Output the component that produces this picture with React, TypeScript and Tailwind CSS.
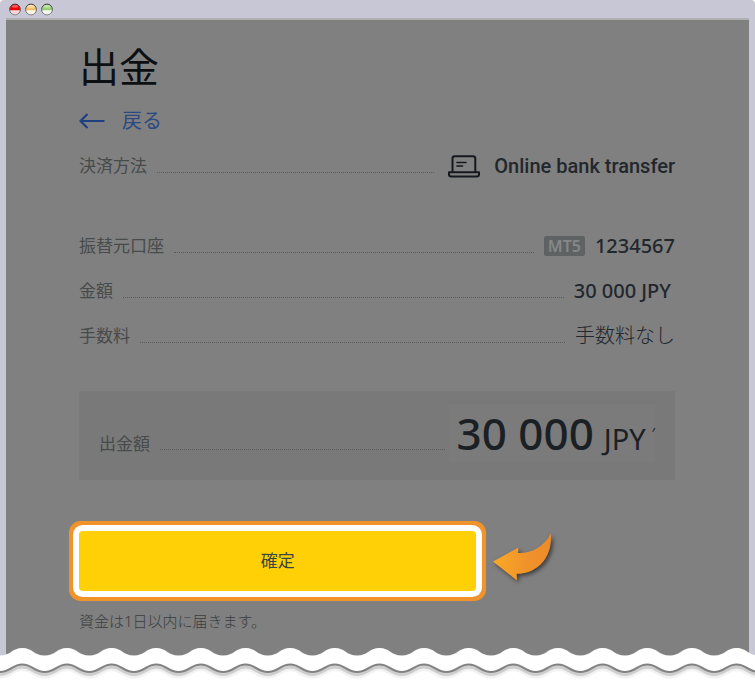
import type { ReactNode } from "react";

interface RowProps {
  label: string;
  children: ReactNode;
}

const lights = [
  { id: "close", top: "#ff1a1a", mid: "#e60000", bottom: "#ffd6d6" },
  { id: "minimize", top: "#ffe2a8", mid: "#f2bc62", bottom: "#fff6e6" },
  { id: "zoom", top: "#b9e3a0", mid: "#93cc72", bottom: "#f6fbf2" },
];

function TitleBar() {
  return (
    <div className="flex h-[18px] items-end gap-1 px-[9px] pb-[2px]">
      {lights.map((light) => (
        <svg key={light.id} width="12" height="13" viewBox="0 0 12 13">
          <defs>
            <linearGradient id={light.id} x1="0" y1="0" x2="0" y2="1">
              <stop offset="0" stopColor={light.top} />
              <stop offset="0.5" stopColor={light.mid} />
              <stop offset="0.62" stopColor={light.bottom} />
              <stop offset="1" stopColor={light.bottom} />
            </linearGradient>
            <linearGradient id={`${light.id}-rim`} x1="0" y1="0" x2="0" y2="1">
              <stop offset="0" stopColor="#3a3434" />
              <stop offset="1" stopColor="#85858c" />
            </linearGradient>
          </defs>
          <circle
            cx="6"
            cy="6.5"
            r="5.4"
            fill={`url(#${light.id})`}
            stroke={`url(#${light.id}-rim)`}
            strokeWidth="1"
          />
          <ellipse cx="6" cy="3.4" rx="3" ry="1.2" fill="#fff" opacity="0.35" />
        </svg>
      ))}
    </div>
  );
}

function Leader() {
  return (
    <span className="mb-[5px] flex-1 self-end border-b border-dotted border-[#595c5c]" />
  );
}

function Row({ label, children }: RowProps) {
  return (
    <div className="flex h-6 items-center gap-2.5">
      <dt className="text-[17px] text-[#474b4b]">{label}</dt>
      <Leader />
      <dd className="flex items-center text-xl text-[#22272d]">{children}</dd>
    </div>
  );
}

function LaptopIcon() {
  return (
    <svg
      width="32"
      height="23"
      viewBox="0 0 32 23"
      fill="none"
      stroke="#15181c"
      strokeWidth="2"
      strokeLinejoin="round"
      strokeLinecap="round"
    >
      <path d="M4.500 16.500V3.500Q4.500 1.200 6.800 1.200H25Q27.300 1.200 27.300 3.500V16.500" />
      <path d="M1 17.200H31V19.500Q31 21.500 28.800 21.500H3.200Q1 21.500 1 19.500Z" />
      <path d="M9 7.500H18M9 11H14.500" strokeWidth="1.600" />
    </svg>
  );
}

function PointerArrow() {
  return (
    <svg
      width="66"
      height="60"
      viewBox="0 0 66 60"
      className="shrink-0 drop-shadow-[2px_2px_2px_rgba(0,0,0,0.55)]"
    >
      <defs>
        <linearGradient id="pointer" x1="0" y1="0" x2="1" y2="0">
          <stop offset="0" stopColor="#f9a825" />
          <stop offset="0.6" stopColor="#f0922b" />
          <stop offset="1" stopColor="#ee8b28" />
        </linearGradient>
      </defs>
      <path
        d="M3 30.500L28.500 16.500L28 22C42 22.500 54 15.500 60.700 2.700C63 23.500 50 42.500 26.700 42.800L27 49.500Z"
        fill="url(#pointer)"
      />
    </svg>
  );
}

function TornEdge() {
  return (
    <svg className="relative -mt-2 block h-8 w-full" aria-hidden="true">
      <defs>
        <pattern
          id="wave"
          width="44.64"
          height="32"
          patternUnits="userSpaceOnUse"
        >
          <path
            d="M0 32V7.500C11 7.500 12 0 22.320 0C32.640 0 33.640 7.500 44.640 7.500V32Z"
            fill="#fff"
          />
          <g fill="none" stroke="#000">
            <path
              d="M0 28C11 28 12 20.500 22.320 20.500C32.640 20.500 33.640 28 44.640 28"
              strokeOpacity="0.05"
              strokeWidth="5"
            />
            <path
              d="M0 26C11 26 12 18.500 22.320 18.500C32.640 18.500 33.640 26 44.640 26"
              strokeOpacity="0.15"
              strokeWidth="4"
            />
          </g>
          <path
            d="M0 24C11 24 12 16.500 22.320 16.500C32.640 16.500 33.640 24 44.640 24"
            fill="none"
            stroke="#808080"
            strokeWidth="2.200"
          />
        </pattern>
      </defs>
      <rect width="100%" height="32" fill="url(#wave)" />
    </svg>
  );
}

export default function App() {
  return (
    <div className="min-h-screen bg-white font-['Noto_Sans','Noto_Sans_CJK_JP',sans-serif]">
      <div className="rounded-t bg-[#c8c7d6]">
        <TitleBar />
        <main className="mx-1.5 border-t-2 border-[#b0b0b0] bg-[#808080] pt-[25px] pr-[74px] pb-[25px] pl-[73px]">
          <h1 className="text-[40px] leading-[44px] text-[#0d1013]">出金</h1>
          <a
            href="#back"
            className="mt-5 flex h-6 items-center gap-[17px] text-xl text-[#2d4a80]"
          >
            <svg
              width="26"
              height="16"
              viewBox="0 0 26 16"
              fill="none"
              stroke="#1f4080"
              strokeWidth="2.200"
            >
              <path d="M8.500 1L1.500 8L8.500 15M1.500 8H25.500" />
            </svg>
            戻る
          </a>

          <dl className="mt-[21px] flex flex-col gap-[21px]">
            <Row label="決済方法">
              <span className="mr-3.5 ml-1">
                <LaptopIcon />
              </span>
              <span className="font-['Roboto',sans-serif] font-medium">
                Online bank transfer
              </span>
            </Row>
            <div className="mt-[35px]">
              <Row label="振替元口座">
                <span className="mr-2.5 rounded-xs bg-[#5f6262] px-1 text-base leading-5 font-semibold text-[#858888]">
                  MT5
                </span>
                <span className="font-medium">1234567</span>
              </Row>
            </div>
            <Row label="金額">
              <span className="mr-1 font-medium">30 000 JPY</span>
            </Row>
            <Row label="手数料">
              <span className="font-light">手数料なし</span>
            </Row>
          </dl>

          <div className="mt-[43px] flex h-[89px] items-center bg-[#797979] px-5">
            <span className="mt-4 text-[17px] text-[#474b4b]">出金額</span>
            <span className="mt-7 mr-1 ml-2.5 flex-1 border-b border-dotted border-[#595c5c]" />
            <p className="mb-1.5 flex items-baseline bg-[#7b7b7b] pl-2 text-[#1b2025]">
              <span className="text-[44px] leading-[58px] font-medium">
                30 000
              </span>
              <span className="ml-2.5 text-[29px]">JPY</span>
              <span className="ml-1.5 self-center text-sm leading-4">′</span>
            </p>
          </div>

          <div className="mt-[51px] flex items-center gap-3.5">
            <button
              type="button"
              className="h-[60px] w-2/3 shrink-0 rounded bg-[#ffd005] text-[17px] text-[#3d4640] shadow-[0_0_0_6px_#ffffff,0_0_0_10px_#f0932b]"
            >
              確定
            </button>
            <PointerArrow />
          </div>
          <p className="mt-5 text-[15px] leading-5 font-light text-[#393d3d]">
            資金は1日以内に届きます。
          </p>
        </main>
      </div>
      <TornEdge />
    </div>
  );
}
